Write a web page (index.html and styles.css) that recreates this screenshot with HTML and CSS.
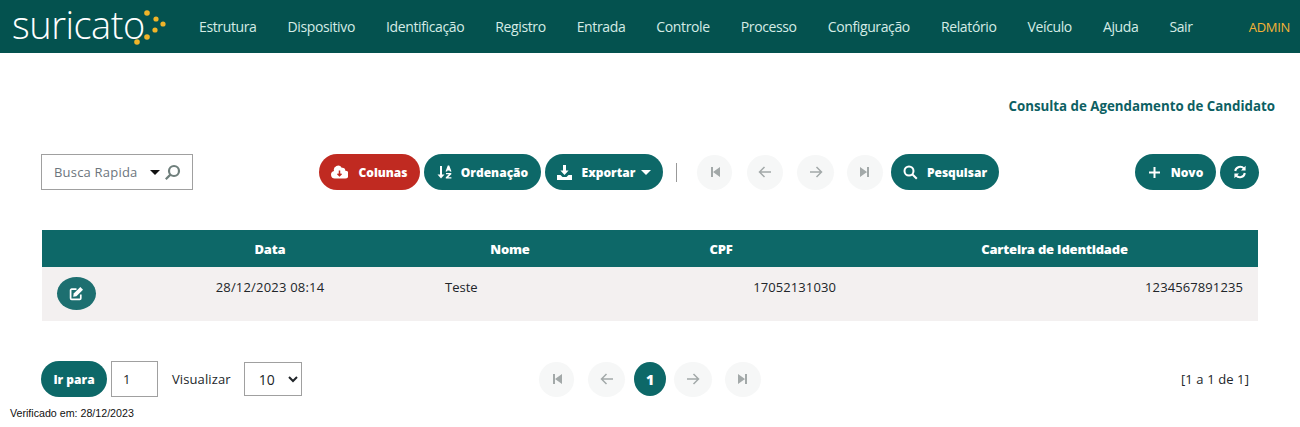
FILE: index.html
```html
<!DOCTYPE html>
<html lang="pt-BR">
<head>
    <meta charset="UTF-8">
    <title>Consulta de Agendamento de Candidato</title>
    <link rel="stylesheet" href="styles.css">
</head>
<body>
    <header class="topbar">
        <div class="logo">
            <span class="logo-text">suricato</span>
            <svg class="logo-dots" width="32" height="44" viewBox="0 0 32 44">
                <circle cx="9" cy="7" r="2.8"/>
                <circle cx="18" cy="13" r="2.6"/>
                <circle cx="25" cy="18" r="2.6"/>
                <circle cx="17" cy="24" r="2.6"/>
                <circle cx="9" cy="31" r="2.8"/>
                <circle cx="-1" cy="36" r="2.8"/>
            </svg>
        </div>
        <nav class="menu">
            <a href="#">Estrutura</a>
            <a href="#">Dispositivo</a>
            <a href="#">Identificação</a>
            <a href="#">Registro</a>
            <a href="#">Entrada</a>
            <a href="#">Controle</a>
            <a href="#">Processo</a>
            <a href="#">Configuração</a>
            <a href="#">Relatório</a>
            <a href="#">Veículo</a>
            <a href="#">Ajuda</a>
            <a href="#">Sair</a>
        </nav>
        <span class="user">ADMIN</span>
    </header>

    <h1 class="page-title">Consulta de Agendamento de Candidato</h1>

    <section class="toolbar">
        <div class="quick-search">
            <span class="quick-label">Busca Rapida</span>
            <span class="caret-down"></span>
            <svg class="quick-icon" width="17" height="17" viewBox="0 0 17 17"><circle cx="10" cy="7" r="5"/><path d="M6.4 10.6l-4.6 4.6"/></svg>
        </div>
        <div class="actions">
            <button class="btn btn-red col-btn">
                <svg width="17" height="14" viewBox="0 0 17 14"><path fill="#fff" d="M4 13.5a3.8 3.8 0 0 1-1-7.5 4.2 4.2 0 0 1 7.7-3.2 2.8 2.8 0 0 1 3.6 2.9 3.9 3.9 0 0 1-.8 7.8z"/><path fill="none" stroke="#c02a21" stroke-width="1.5" d="M8.5 5.5v5M6.5 8.7l2 2 2-2"/></svg>
                Colunas
            </button>
            <button class="btn ord-btn">
                <svg width="15" height="14" viewBox="0 0 15 14" fill="#fff"><path d="M3 1h2v8.5h2.5L4 13.5.5 9.5H3z"/><path d="M8.5 6.5L10.8 .5h1.4l2.3 6h-1.6l-.4-1.1h-2l-.4 1.1zM9 8h5.3v1.2l-3.1 3h3.2v1.3H8.8v-1.2l3.1-3H9z"/></svg>
                Ordenação
            </button>
            <button class="btn exp-btn">
                <svg width="15" height="15" viewBox="0 0 15 15" fill="#fff"><path d="M6 0h3v5.5h2.6L7.5 10 3.4 5.5H6z"/><path d="M0 10h3.5l2 2h4l2-2H15v5H0z"/></svg>
                Exportar
                <span class="caret-white"></span>
            </button>
            <span class="sep"></span>
            <button class="nav-btn first-a">
                <svg width="12" height="12" viewBox="0 0 12 12"><path d="M2 1h2v10H2zM11 1v10L4 6z"/></svg>
            </button>
            <button class="nav-btn prev-a">
                <svg class="arrow" width="14" height="12" viewBox="0 0 14 12"><path d="M13 6H1.5M6.5 1L1.5 6l5 5"/></svg>
            </button>
            <button class="nav-btn next-a">
                <svg class="arrow" width="14" height="12" viewBox="0 0 14 12"><path d="M1 6h11.5M7.5 1l5 5-5 5"/></svg>
            </button>
            <button class="nav-btn last-a">
                <svg width="12" height="12" viewBox="0 0 12 12"><path d="M1 1v10l7-5zM8 1h2v10H8z"/></svg>
            </button>
            <button class="btn search-btn">
                <svg class="lens" width="15" height="15" viewBox="0 0 15 15"><circle cx="6" cy="6" r="4.5"/><path d="M9.5 9.5l4.3 4.3"/></svg>
                Pesquisar
            </button>
        </div>
        <div class="right-actions">
            <button class="btn new-btn">
                <svg class="plus" width="13" height="13" viewBox="0 0 13 13"><path d="M6.5 1v11M1 6.5h11"/></svg>
                Novo
            </button>
            <button class="btn refresh-btn">
                <svg width="14" height="14" viewBox="0 0 14 14"><path class="sync" d="M2.2 6a5 5 0 0 1 8.8-2.4M11.8 8A5 5 0 0 1 3 10.4"/><path fill="#fff" d="M12.6 .8v4.6H8zM1.4 13.2V8.6H6z"/></svg>
            </button>
        </div>
    </section>

    <table class="grid">
        <colgroup>
            <col class="c-edit"><col class="c-data"><col class="c-nome"><col class="c-cpf"><col class="c-rg">
        </colgroup>
        <thead>
            <tr>
                <th></th>
                <th>Data</th>
                <th>Nome</th>
                <th>CPF</th>
                <th class="rg-head">Carteira de Identidade</th>
            </tr>
        </thead>
        <tbody>
            <tr>
                <td class="edit-cell">
                    <button class="edit-btn">
                        <svg width="15" height="15" viewBox="0 0 14 14"><path class="edit-box" d="M11 8v3.5a1 1 0 0 1-1 1H2.5a1 1 0 0 1-1-1V4a1 1 0 0 1 1-1H7"/><path fill="#fff" d="M10.6.9l2.5 2.5-6.2 6.2-3 .5.5-3z"/></svg>
                    </button>
                </td>
                <td class="center">28/12/2023 08:14</td>
                <td class="name-cell">Teste</td>
                <td class="num cpf-cell">17052131030</td>
                <td class="num">1234567891235</td>
            </tr>
        </tbody>
    </table>

    <footer class="pager">
        <div class="pager-left">
            <button class="btn goto-btn">Ir para</button>
            <input class="goto-input" type="text" value="1">
            <span class="view-label">Visualizar</span>
            <select class="view-select"><option>10</option></select>
        </div>
        <div class="pager-nav">
            <button class="nav-btn first-b">
                <svg width="12" height="12" viewBox="0 0 12 12"><path d="M2 1h2v10H2zM11 1v10L4 6z"/></svg>
            </button>
            <button class="nav-btn prev-b">
                <svg class="arrow" width="14" height="12" viewBox="0 0 14 12"><path d="M13 6H1.5M6.5 1L1.5 6l5 5"/></svg>
            </button>
            <button class="page-current">1</button>
            <button class="nav-btn next-b">
                <svg class="arrow" width="14" height="12" viewBox="0 0 14 12"><path d="M1 6h11.5M7.5 1l5 5-5 5"/></svg>
            </button>
            <button class="nav-btn last-b">
                <svg width="12" height="12" viewBox="0 0 12 12"><path d="M1 1v10l7-5zM8 1h2v10H8z"/></svg>
            </button>
        </div>
        <span class="page-info">[1 a 1 de 1]</span>
    </footer>

    <p class="verified">Verificado em: 28/12/2023</p>
</body>
</html>
```

FILE: styles.css
```css
body {
    margin: 0;
    font-family: "Open Sans", "Noto Sans", sans-serif;
    font-size: 13px;
    color: #212529;
    background-color: #fff;
}
button {
    font-family: inherit;
    border: none;
    padding: 0;
    cursor: pointer;
}

/* top bar */
.topbar {
    display: flex;
    align-items: center;
    height: 53px;
    background-color: #04524f;
}
.logo {
    display: flex;
    align-items: flex-start;
    width: 199px;
    height: 53px;
    padding-left: 12px;
    box-sizing: border-box;
}
.logo-text {
    font-size: 38px;
    font-weight: 300;
    line-height: 48px;
    letter-spacing: -0.5px;
    color: #fff;
}
.logo-dots {
    flex: none;
    margin: 6px 0 0 -7px;
    overflow: visible;
    fill: #f0b429;
}
.menu {
    display: flex;
    gap: 31px;
}
.menu a {
    font-size: 14px;
    letter-spacing: -0.37px;
    color: #d5ece6;
    text-decoration: none;
}
.user {
    margin-left: auto;
    margin-right: 10px;
    font-size: 13px;
    font-weight: 500;
    letter-spacing: -0.3px;
    color: #f5b335;
}

.page-title {
    margin: 44px 25px 0 0;
    font-size: 13.3px;
    line-height: 18px;
    font-weight: 700;
    text-align: right;
    color: #0d5f63;
}

/* toolbar */
.toolbar {
    display: flex;
    align-items: center;
    height: 36px;
    margin: 39px 41px 0;
}
.quick-search {
    display: flex;
    align-items: center;
    width: 152px;
    height: 36px;
    margin-right: 126px;
    padding-left: 12px;
    box-sizing: border-box;
    border: 1px solid #a0a0a0;
}
.quick-label {
    color: #6c757d;
    letter-spacing: 0.2px;
}
.caret-down {
    margin-left: 13px;
    border-top: 5px solid #111;
    border-left: 5px solid transparent;
    border-right: 5px solid transparent;
}
.quick-icon {
    margin-left: 4px;
    fill: none;
    stroke: #6f7f7c;
    stroke-width: 2.2;
}
.actions {
    display: flex;
    align-items: center;
    gap: 4px;
}
.right-actions {
    display: flex;
    align-items: center;
    gap: 4px;
    margin-left: auto;
}
.btn {
    display: inline-flex;
    align-items: center;
    justify-content: center;
    height: 36px;
    border-radius: 18px;
    font-size: 12px;
    font-weight: 800;
    color: #fff;
    background-color: #0d6868;
}
.btn-red {
    background-color: #c02a21;
}
.col-btn {
    width: 101px;
    gap: 10px;
}
.ord-btn {
    width: 117px;
    gap: 9px;
}
.exp-btn {
    width: 118px;
    gap: 10px;
}
.caret-white {
    margin-left: -4px;
    border-top: 5px solid #fff;
    border-left: 5px solid transparent;
    border-right: 5px solid transparent;
}
.sep {
    width: 1px;
    height: 19px;
    margin: 0 16px 0 9px;
    background-color: #999;
}
.nav-btn {
    display: inline-flex;
    align-items: center;
    justify-content: center;
    width: 35px;
    height: 35px;
    border-radius: 50%;
    background-color: #f6f7f7;
    fill: #a3a9a9;
}
.arrow {
    fill: none;
    stroke: #a3a9a9;
    stroke-width: 1.5;
}
.first-a { margin-right: 11px; }
.prev-a { margin-right: 10px; width: 36px; }
.next-a { margin-right: 9px; width: 37px; }
.last-a { margin-right: 4px; width: 36px; }
.search-btn {
    width: 108px;
    gap: 9px;
}
.lens {
    fill: none;
    stroke: #fff;
    stroke-width: 2;
}
.new-btn {
    width: 81px;
    gap: 10px;
}
.plus {
    fill: none;
    stroke: #fff;
    stroke-width: 2;
}
.refresh-btn {
    width: 39px;
    height: 33px;
}
.sync {
    fill: none;
    stroke: #fff;
    stroke-width: 2;
}

/* table */
.grid {
    width: 1216px;
    margin: 40px 0 0 42px;
    border-collapse: collapse;
    table-layout: fixed;
}
.c-edit { width: 65px; }
.c-data { width: 326px; }
.c-nome { width: 154px; }
.c-cpf { width: 268px; }
.c-rg { width: 403px; }
.grid th {
    height: 37px;
    padding: 0;
    font-size: 13px;
    font-weight: 800;
    letter-spacing: -0.2px;
    color: #fff;
    background-color: #0d6868;
}
.grid th.rg-head {
    padding-right: 4px;
}
.grid td {
    height: 54px;
    padding: 10px 15px 0 12px;
    box-sizing: border-box;
    vertical-align: top;
    line-height: 20px;
    background-color: #f3f0f0;
}
.grid td.edit-cell {
    padding: 10px 0 0 15px;
}
.grid td.center {
    text-align: center;
    padding-left: 0;
    padding-right: 0;
    letter-spacing: 0.2px;
}
.grid td.num {
    text-align: right;
    letter-spacing: 0.1px;
}
.grid td.cpf-cell {
    padding-right: 19px;
}
.edit-btn {
    display: flex;
    align-items: center;
    justify-content: center;
    width: 39px;
    height: 33px;
    border-radius: 50%;
    background-color: #1d6f70;
}
.edit-box {
    fill: none;
    stroke: #fff;
    stroke-width: 1.6;
}

/* footer */
.pager {
    display: flex;
    align-items: center;
    height: 36px;
    margin: 40px 51px 0 41px;
}
.pager-left {
    display: flex;
    align-items: center;
    width: 498px;
}
.goto-btn {
    width: 66px;
}
.goto-input {
    width: 47px;
    height: 36px;
    margin-left: 4px;
    padding: 0 0 0 11px;
    box-sizing: border-box;
    border: 1px solid #a0a0a0;
    font-family: inherit;
    font-size: 13px;
    color: #212529;
}
.view-label {
    margin: 0 13px 0 14px;
    letter-spacing: 0.1px;
}
.view-select {
    width: 58px;
    height: 34px;
    border: 1px solid #a0a0a0;
    background-color: #fff;
    padding-left: 10px;
    font-family: inherit;
    font-size: 14px;
    color: #212529;
}
.pager-nav {
    display: flex;
    align-items: center;
}
.first-b { margin-right: 14px; }
.prev-b { width: 37px; margin-right: 9px; }
.next-b { width: 38px; margin: 0 13px 0 8px; }
.last-b { width: 36px; }
.page-current {
    width: 32px;
    height: 34px;
    border-radius: 50%;
    font-size: 14px;
    font-weight: 800;
    color: #fff;
    background-color: #0d6868;
}
.page-info {
    margin-left: auto;
    font-size: 13px;
    letter-spacing: 0.1px;
}

.verified {
    margin: 10px 0 0 10px;
    font-family: "Liberation Sans", Arial, sans-serif;
    font-size: 10.67px;
    line-height: 12px;
    color: #111;
}
```
